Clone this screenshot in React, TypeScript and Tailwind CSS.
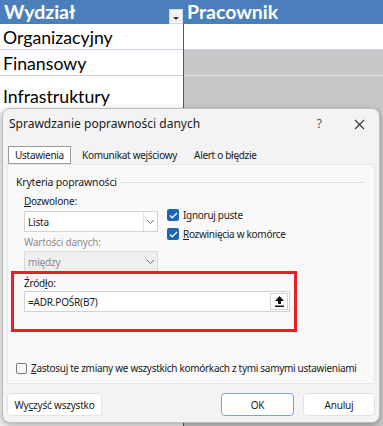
import React from "react";

const Chevron = () => (
    <svg width="9" height="6" viewBox="0 0 9 6" fill="none" stroke="#707070" strokeWidth="1">
        <path d="M1 1l3.5 3.5L8 1" />
    </svg>
);

const Check = ({ checked }: { checked: boolean }) => (
    checked ? (
        <span className="flex h-[12px] w-[12px] shrink-0 items-center justify-center rounded-[2px] bg-[#1e66b5]">
            <svg width="9" height="7" viewBox="0 0 10 8" fill="none" stroke="white" strokeWidth="1.4">
                <path d="M1 4l2.6 2.6L9 1.2" />
            </svg>
        </span>
    ) : (
        <span className="h-[11px] w-[11px] shrink-0 rounded-[2px] border border-[#7a7a7a] bg-[#fbfbfb]" />
    )
);

const Button = ({ label, primary, className }: { label: React.ReactNode; primary?: boolean; className: string }) => (
    <div className={`flex h-[23px] items-center justify-center whitespace-nowrap rounded-[4px] border bg-white text-[10px] text-[#1a1a1a] ${primary ? "border-[#7ea4cf]" : "border-[#e3e3e3]"} ${className}`}>
        {label}
    </div>
);

export default function App() {
    return (
        <div className="relative h-[426px] w-[383px] overflow-hidden bg-white font-['Lato',sans-serif]">
            {/* arkusz excel */}
            <div className="grid grid-cols-[183px_1px_199px]">
                <div className="flex h-[24px] items-center justify-between bg-[#4b7fbc] pl-[4px]">
                    <span className="text-[19.5px] font-bold text-white">Wydział</span>
                    <span className="mt-[9px] flex h-[15px] w-[14px] items-center justify-center border border-[#d6dce4] bg-[#f4f4f4]">
                        <span className="mt-[3px] h-0 w-0 border-x-[3px] border-t-[3px] border-x-transparent border-t-[#333]" />
                    </span>
                </div>
                <div className="bg-[#4b7fbc]" />
                <div className="flex h-[24px] items-center bg-[#4b7fbc] pl-[3px]">
                    <span className="text-[19.5px] font-bold text-white">Pracownik</span>
                </div>

                <div className="flex h-[26px] items-center border-b border-[#c7d3e3] pl-[3px] pt-[3px] text-[17.7px] text-black">Organizacyjny</div>
                <div className="row-span-4 bg-[#2b6f45]" />
                <div className="h-[26px] border-b border-[#c7d3e3] bg-white" />

                <div className="flex h-[26px] items-center border-b border-[#c7d3e3] pl-[3px] pt-[3px] text-[17.7px] text-black">Finansowy</div>
                <div className="h-[26px] border-b border-[#e2e2e2] bg-[#c8c8c8]" />

                <div className="flex h-[36px] items-end pb-[1px] pl-[3px] text-[17.7px] text-black">Infrastruktury</div>
                <div className="h-[36px] bg-[#c8c8c8]" />

                <div className="h-[320px] bg-[#f2f2f2]" />
                <div className="h-[320px] bg-[#c8c8c8]" />
            </div>

            {/* okno dialogowe */}
            <div className="absolute left-[2px] top-[108px] flex h-[315px] w-[378px] flex-col rounded-[8px] border border-[#bdbdbd] bg-[#f3f3f3] font-['Noto_Sans',sans-serif] text-[10px] leading-[14px] tracking-[-0.2px] text-[#1a1a1a] shadow-[0_2px_6px_rgba(0,0,0,0.3)]">
                <div className="flex h-[30px] items-center pl-[6px] pr-[14px] text-[12px] tracking-normal">
                    <span className="flex-1">Sprawdzanie poprawności danych</span>
                    <span className="mr-[32px] text-[12px] text-[#555]">?</span>
                    <svg width="11" height="11" viewBox="0 0 11 11" stroke="#333" strokeWidth="1.1">
                        <path d="M1 1l9 9M10 1l-9 9" />
                    </svg>
                </div>

                <div className="flex h-[25px] items-end pl-[5px] tracking-[-0.3px]">
                    <div className="flex h-[18px] w-[63px] items-center justify-center border border-[#9a9a9a] bg-white">Ustawienia</div>
                    <div className="ml-[11px] flex h-[18px] items-center">Komunikat wejściowy</div>
                    <div className="ml-[17px] flex h-[18px] items-center">Alert o błędzie</div>
                </div>

                <div className="mx-[4px] flex h-[220px] flex-col border border-[#e6e6e6] bg-[#f9f9f9] px-[8px] pt-[10px]">
                    <div className="flex h-[14px] items-center gap-[4px]">
                        <span className="text-[10.5px]">Kryteria poprawności</span>
                        <span className="mr-[2px] h-px flex-1 bg-[#dcdcdc]" />
                    </div>

                    <div className="flex pl-[8px]">
                        <div className="flex w-[134px] flex-col">
                            <span className="mt-[5px] h-[14px]"><span className="underline">D</span>ozwolone:</span>
                            <div className="mt-[3px] flex h-[21px] items-center border border-[#d2d2d2] bg-white">
                                <span className="flex-1 pl-[3px]">Lista</span>
                                <span className="flex h-full w-[14px] items-center justify-center border-l border-[#e3e3e3]"><Chevron /></span>
                            </div>
                            <span className="mt-[3px] h-[14px] text-[#8c8c8c]">Wartości danych:</span>
                            <div className="mt-[2px] flex h-[21px] items-center border border-[#dadada] bg-[#efefef] text-[#8c8c8c]">
                                <span className="flex-1 pl-[3px]">między</span>
                                <span className="flex h-full w-[14px] items-center justify-center"><Chevron /></span>
                            </div>
                        </div>
                        <div className="ml-[9px] mt-[19px] flex flex-col gap-[5px] tracking-[-0.3px]">
                            <div className="flex h-[14px] items-center gap-[4px]">
                                <Check checked />
                                <span>Ignoru<span className="underline">j</span> puste</span>
                            </div>
                            <div className="flex h-[14px] items-center gap-[4px]">
                                <Check checked />
                                <span><span className="underline">R</span>ozwinięcia w komórce</span>
                            </div>
                        </div>
                    </div>

                    <div className="-mx-[5px] -mt-[1px] flex h-[61px] w-[286px] flex-col border-[3px] border-[#ee1c25] pl-[10px] pr-[4px] pt-[2px]">
                        <span className="h-[14px]">Źród<span className="underline">ł</span>o:</span>
                        <div className="mt-[1px] flex h-[21px] items-center border border-[#d2d2d2] bg-white">
                            <span className="flex-1 pl-[3px]">=ADR.POŚR(B7)</span>
                            <span className="mr-[1px] flex h-[17px] w-[18px] items-center justify-center border border-[#d2d2d2] bg-white">
                                <svg width="9" height="11" viewBox="0 0 9 11" fill="#111">
                                    <path d="M4.5 0L9 5H6v3H3V5H0z" />
                                    <rect x="0" y="9.5" width="9" height="1.5" />
                                </svg>
                            </span>
                        </div>
                    </div>

                    <div className="mt-[29px] flex h-[14px] items-center gap-[4px] whitespace-nowrap tracking-[-0.3px]">
                        <Check checked={false} />
                        <span><span className="underline">Z</span>astosuj te zmiany we wszystkich komórkach z tymi samymi ustawieniami</span>
                    </div>
                </div>

                <div className="flex items-center px-[4px] pt-[9px]">
                    <Button label={<span>Wy<span className="underline">c</span>zyść wszystko</span>} className="w-[95px]" />
                    <span className="flex-1" />
                    <Button label="OK" primary className="w-[73px]" />
                    <Button label="Anuluj" className="ml-[9px] w-[72px]" />
                </div>
            </div>
        </div>
    );
}
